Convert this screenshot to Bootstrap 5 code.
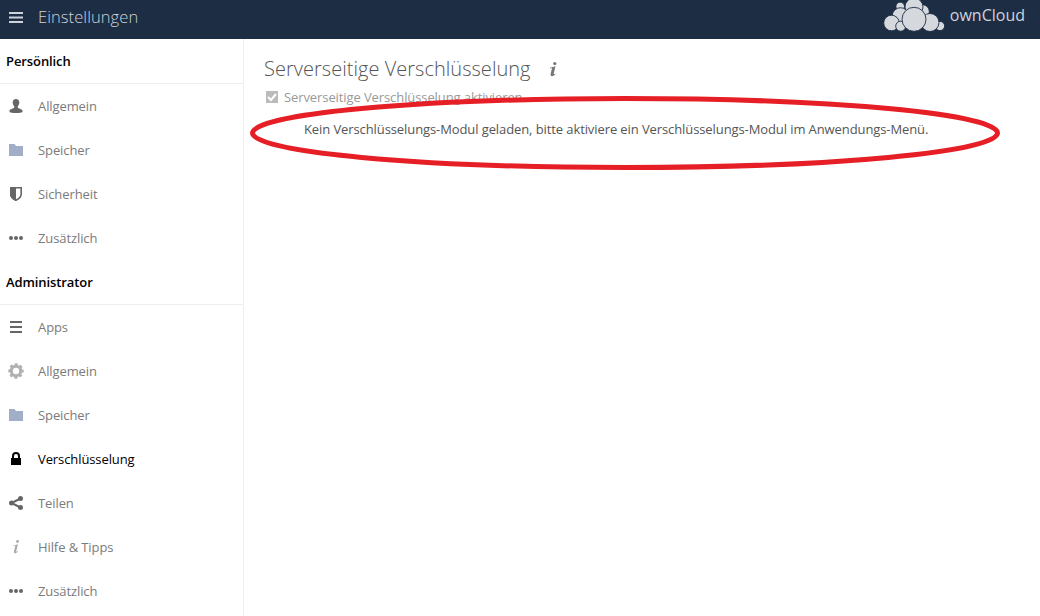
<!DOCTYPE html>
<html lang="de">
<head>
  <meta charset="UTF-8" />
  <meta name="viewport" content="width=device-width, initial-scale=1.0" />
  <title>Einstellungen - ownCloud</title>
  <link href="https://cdn.jsdelivr.net/npm/bootstrap@5.3.0/dist/css/bootstrap.min.css" rel="stylesheet">
  <style>
    body {
      font-family: "Open Sans", sans-serif;
      font-size: 13px;
      line-height: 20px;
      letter-spacing: -.095px;
      color: #555;
      background-color: #fff;
    }
    .topbar {
      height: 39px;
      background-color: #1d2d44;
      color: #ced3da;
    }
    .topbar-title {
      font-size: 16.5px;
      font-weight: 300;
      letter-spacing: .08px;
      margin-left: 14px;
      margin-top: -5px;
    }
    .menu-icon {
      margin: -5px 0 0 8px;
    }
    .brand {
      margin-right: 15px;
    }
    .brand-name {
      font-size: 16px;
      letter-spacing: 0;
      margin-left: 5px;
      margin-top: -9px;
    }
    .sidebar {
      width: 244px;
      height: 577px;
      border-right: 1px solid #eee;
    }
    .side-heading {
      height: 45px;
      padding: 12px 6px;
      font-size: 13px;
      font-weight: 600;
      color: #000;
      border-bottom: 1px solid #eee;
    }
    .side-link {
      height: 44px;
      padding-left: 8px;
      color: #7b7b7b;
      text-decoration: none;
    }
    .side-link svg {
      margin-right: 14px;
      color: #666;
    }
    .side-link.active,
    .side-link.active svg {
      color: #000;
    }
    .content {
      padding: 15px 0 0 20px;
    }
    .section-title {
      font-size: 20px;
      font-weight: 300;
      line-height: 30px;
      letter-spacing: .03px;
      color: #555;
    }
    .info {
      margin-left: 14px;
    }
    .enable-row {
      height: 20px;
      margin-top: 3px;
      padding-left: 2px;
      color: #999;
    }
    .check {
      margin-right: 6px;
    }
    .module-note {
      margin: 12px 0 0 40px;
    }
    /* hand-drawn marking over the message */
    .marker {
      left: 5px;
      top: 55px;
      pointer-events: none;
    }
  </style>
</head>
<body class="overflow-hidden">

  <!-- Header -->
  <header class="topbar d-flex align-items-center">
    <svg class="menu-icon" width="16" height="16" fill="currentColor"><path d="M1 3h14v2H1zM1 7.500h14v2H1zM1 12h14v2H1z"/></svg>
    <div class="topbar-title">Einstellungen</div>
    <div class="brand d-flex align-items-center align-self-start ms-auto">
      <svg width="62" height="39" viewBox="0 0 62 39" fill="#d5d8dd" stroke="#1d2d44" stroke-width=".9">
        <circle cx="17.200" cy="6.500" r="4.300"/><circle cx="39.500" cy="11.500" r="6.800"/>
        <circle cx="31" cy="7" r="9"/><circle cx="17.500" cy="16" r="8.300"/>
        <circle cx="8.500" cy="23" r="7.800"/><circle cx="17.700" cy="26.200" r="5"/>
        <circle cx="57" cy="26" r="4.600"/><circle cx="47" cy="22.500" r="9"/>
        <circle cx="31" cy="19.300" r="12"/>
      </svg>
      <div class="brand-name">ownCloud</div>
    </div>
  </header>

  <div class="d-flex">
    <!-- Sidebar -->
    <nav class="sidebar flex-shrink-0 overflow-hidden">
      <div class="side-heading">Persönlich</div>
      <a href="#" class="side-link d-flex align-items-center">
        <svg width="16" height="16" fill="currentColor"><path d="M8 1C6 1 4.700 2.500 4.700 4.500c0 1.600.7 2.800 1.500 3.700v1.600C5.500 10.700 2 11 1.500 12.500V14c1.500 1.300 11.500 1.300 13 0v-1.500C14 11 10.500 10.700 9.800 9.800V8.200c.8-.9 1.500-2.100 1.500-3.700C11.300 2.500 10 1 8 1z"/></svg>
        <span>Allgemein</span>
      </a>
      <a href="#" class="side-link d-flex align-items-center">
        <svg width="16" height="16"><path fill="#a0aec8" d="M1 2h5.500l1.500 2h7v10H1z"/></svg>
        <span>Speicher</span>
      </a>
      <a href="#" class="side-link d-flex align-items-center">
        <svg width="16" height="16"><path fill="none" stroke="currentColor" stroke-width="1.600" d="M2.800 1.800h10.400V8c0 3-2.600 5-5.200 6.200C5.400 13 2.800 11 2.800 8z"/><path fill="currentColor" d="M2 1h6v14C5 14 2 11.500 2 8z"/></svg>
        <span>Sicherheit</span>
      </a>
      <a href="#" class="side-link d-flex align-items-center">
        <svg width="16" height="16" fill="currentColor"><circle cx="3" cy="8" r="2"/><circle cx="8" cy="8" r="2"/><circle cx="13" cy="8" r="2"/></svg>
        <span>Zusätzlich</span>
      </a>

      <div class="side-heading">Administrator</div>
      <a href="#" class="side-link d-flex align-items-center">
        <svg width="16" height="16" fill="currentColor"><path d="M2 2h12v2H2zM2 7h12v2H2zM2 12h12v2H2z"/></svg>
        <span>Apps</span>
      </a>
      <a href="#" class="side-link d-flex align-items-center">
        <svg width="16" height="16" fill="none" stroke="#b0b0b0"><circle cx="8" cy="8" r="4.700" stroke-width="3"/><circle cx="8" cy="8" r="6.600" stroke-width="2.200" stroke-dasharray="3 2.184" stroke-dashoffset="1.500"/></svg>
        <span>Allgemein</span>
      </a>
      <a href="#" class="side-link d-flex align-items-center">
        <svg width="16" height="16"><path fill="#a0aec8" d="M1 2h5.500l1.500 2h7v10H1z"/></svg>
        <span>Speicher</span>
      </a>
      <a href="#" class="side-link active d-flex align-items-center">
        <svg width="16" height="16"><path fill="currentColor" d="M3 7h10v7H3z"/><path fill="none" stroke="currentColor" stroke-width="2" d="M5 7.500V5a3 3 0 0 1 6 0v2.500"/></svg>
        <span>Verschlüsselung</span>
      </a>
      <a href="#" class="side-link d-flex align-items-center">
        <svg width="16" height="16" fill="currentColor"><path fill="none" stroke="currentColor" stroke-width="2" d="M12.500 3.500L3.500 8l9 4.500"/><circle cx="12.500" cy="3.500" r="2.500"/><circle cx="3.500" cy="8" r="2.500"/><circle cx="12.500" cy="12.500" r="2.500"/></svg>
        <span>Teilen</span>
      </a>
      <a href="#" class="side-link d-flex align-items-center">
        <svg width="16" height="16"><g fill="#aaa"><circle cx="9.500" cy="2.500" r="1.400"/><path d="M5.300 6.700L10 5.300 8.200 12.300c-.1.600.3.600 1.700-.4v.6C8 14.800 5.600 15 5.900 12.500L7.300 7c0-.5-.7-.3-2 .3z"/></g></svg>
        <span>Hilfe &amp; Tipps</span>
      </a>
      <a href="#" class="side-link d-flex align-items-center">
        <svg width="16" height="16" fill="currentColor"><circle cx="3" cy="8" r="2"/><circle cx="8" cy="8" r="2"/><circle cx="13" cy="8" r="2"/></svg>
        <span>Zusätzlich</span>
      </a>
    </nav>

    <!-- Encryption settings -->
    <main class="content flex-grow-1 position-relative">
      <div class="d-flex align-items-center">
        <h2 class="section-title mb-0">Serverseitige Verschlüsselung</h2>
        <svg class="info" width="16" height="16"><g fill="#777"><circle cx="9.800" cy="2.500" r="1.600"/><path d="M5 6.700L10.500 5.300 8.700 12.800c-.1.600.3.600 1.700-.4v.6C8.200 15.900 5.200 15.900 5.600 13L7 7.300c0-.5-.7-.3-2 .3z"/></g></svg>
      </div>
      <div class="enable-row d-flex align-items-center">
        <svg class="check" width="12" height="12"><path fill="#bbb" d="M0 0h12v12H0z"/><path fill="none" stroke="#fff" stroke-width="2" d="M2 6l3 3 5-6"/></svg>
        <span>Serverseitige Verschlüsselung aktivieren</span>
      </div>
      <p class="module-note">Kein Verschlüsselungs-Modul geladen, bitte aktiviere ein Verschlüsselungs-Modul im Anwendungs-Menü.</p>
      <svg class="marker position-absolute" width="752" height="78"><ellipse cx="376" cy="39" rx="372.500" ry="34.500" fill="none" stroke="#e61e25" stroke-width="5"/></svg>
    </main>
  </div>

  <script src="https://cdn.jsdelivr.net/npm/bootstrap@5.3.0/dist/js/bootstrap.bundle.min.js"></script>
</body>
</html>
